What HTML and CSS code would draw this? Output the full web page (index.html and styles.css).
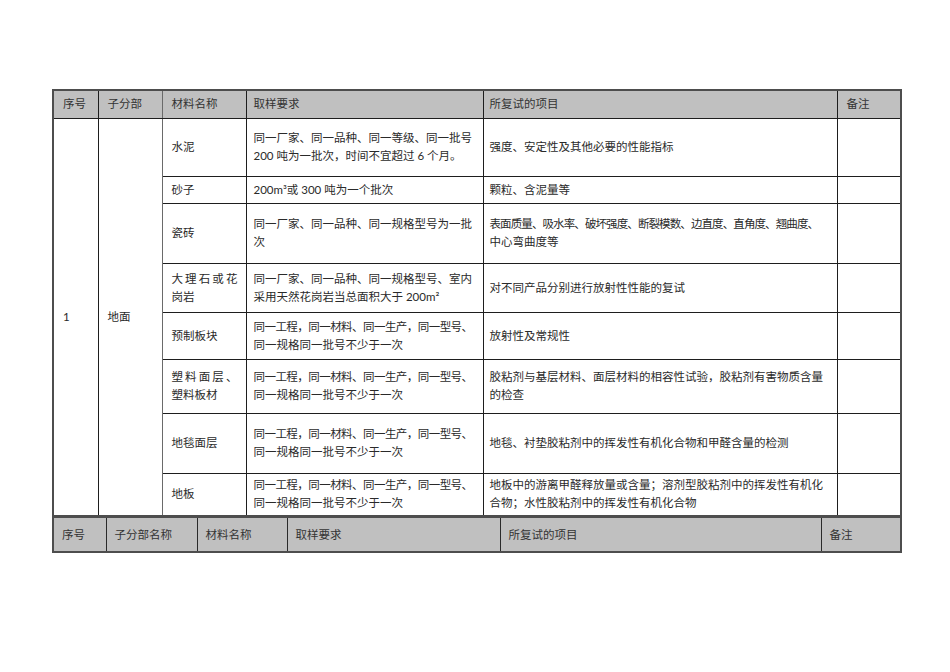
FILE: index.html
```html
<!DOCTYPE html>
<html lang="zh-CN">
<head>
<meta charset="utf-8">
<title>材料复试</title>
<link rel="stylesheet" href="styles.css">
</head>
<body>
<div class="page">
  <table class="grid main">
    <colgroup>
      <col class="c1"><col class="c2"><col class="c3"><col class="c4"><col class="c5"><col class="c6">
    </colgroup>
    <tr class="head">
      <th>序号</th><th class="soft">子分部</th><th>材料名称</th><th>取样要求</th><th>所复试的项目</th><th>备注</th>
    </tr>
    <tr class="r1">
      <td rowspan="8">1</td>
      <td rowspan="8" class="soft">地面</td>
      <td>水泥</td>
      <td class="nw">同一厂家、同一品种、同一等级、同一批号<br>200 吨为一批次，时间不宜超过 6 个月。</td>
      <td class="nw">强度、安定性及其他必要的性能指标</td>
      <td></td>
    </tr>
    <tr class="r2">
      <td>砂子</td>
      <td class="nw">200m³或 300 吨为一个批次</td>
      <td class="nw">颗粒、含泥量等</td>
      <td></td>
    </tr>
    <tr class="r3">
      <td>瓷砖</td>
      <td class="nw">同一厂家、同一品种、同一规格型号为一批<br>次</td>
      <td class="nw"><span class="tight2">表面质量、吸水率、破坏强度、断裂模数、边直度、直角度、翘曲度、</span><br>中心弯曲度等</td>
      <td></td>
    </tr>
    <tr class="r4">
      <td class="just">大理石或花岗岩</td>
      <td class="nw">同一厂家、同一品种、同一规格型号、室内<br>采用天然花岗岩当总面积大于 200m²</td>
      <td class="nw">对不同产品分别进行放射性性能的复试</td>
      <td></td>
    </tr>
    <tr class="r5">
      <td>预制板块</td>
      <td class="nw"><span class="tight">同一工程，同一材料、同一生产，同一型号、</span><br>同一规格同一批号不少于一次</td>
      <td class="nw">放射性及常规性</td>
      <td></td>
    </tr>
    <tr class="r6">
      <td class="just">塑料面层、塑料板材</td>
      <td class="nw"><span class="tight">同一工程，同一材料、同一生产，同一型号、</span><br>同一规格同一批号不少于一次</td>
      <td class="nw">胶粘剂与基层材料、面层材料的相容性试验，胶粘剂有害物质含量<br>的检查</td>
      <td></td>
    </tr>
    <tr class="r7">
      <td>地毯面层</td>
      <td class="nw"><span class="tight">同一工程，同一材料、同一生产，同一型号、</span><br>同一规格同一批号不少于一次</td>
      <td class="nw">地毯、衬垫胶粘剂中的挥发性有机化合物和甲醛含量的检测</td>
      <td></td>
    </tr>
    <tr class="r8">
      <td>地板</td>
      <td class="nw"><span class="tight">同一工程，同一材料、同一生产，同一型号、</span><br>同一规格同一批号不少于一次</td>
      <td class="nw">地板中的游离甲醛释放量或含量；溶剂型胶粘剂中的挥发性有机化<br>合物；水性胶粘剂中的挥发性有机化合物</td>
      <td></td>
    </tr>
  </table>
  <table class="grid foot">
    <colgroup>
      <col class="d1"><col class="d2"><col class="d3"><col class="d4"><col class="d5"><col class="d6">
    </colgroup>
    <tr class="head2">
      <th>序号</th><th>子分部名称</th><th>材料名称</th><th>取样要求</th><th>所复试的项目</th><th>备注</th>
    </tr>
  </table>
</div>
</body>
</html>
```

FILE: styles.css
```css
html, body {
  margin: 0;
  padding: 0;
  background: #ffffff;
}

body {
  font-family: "Lato", "Noto Sans CJK SC", sans-serif;
  font-size: 11.5px;
  color: #2a2a2a;
}

.page {
  padding: 89px 0 0 52px;
}

.grid {
  border-collapse: collapse;
  table-layout: fixed;
  width: 848px;
  border: 2px solid #4d4d4d;
}

.grid th,
.grid td {
  border: 1px solid #1e1e1e;
  padding: 0 8px 0 9px;
  text-align: left;
  vertical-align: middle;
  font-weight: normal;
  line-height: 18px;
  overflow: visible;
}

.grid th {
  background: #c0c0c0;
  color: #333333;
}

.grid .soft {
  border-left-color: #6a6a6a;
  border-right-color: #6a6a6a;
}

.main .c1 { width: 45px; }
.main .c2 { width: 64px; }
.main .c3 { width: 84px; }
.main .c4 { width: 237px; }
.main .c5 { width: 354px; }
.main .c6 { width: 64px; }

.main td:nth-last-child(3),
.main th:nth-child(4) {
  padding-left: 7px;
}

.main th:nth-child(5) {
  padding-left: 6px;
}

.main .nw {
  white-space: nowrap;
}

.main td.nw + td.nw {
  padding-left: 6px;
}

.tight {
  letter-spacing: -0.55px;
}

.tight2 {
  letter-spacing: -0.9px;
}

.just {
  text-align: justify !important;
}

.head { height: 28px; }
.r1 { height: 58px; }
.r2 { height: 27px; }
.r3 { height: 60px; }
.r4 { height: 49px; }
.r5 { height: 47px; }
.r6 { height: 54px; }
.r7 { height: 60px; }
.r8 { height: 43px; }

.foot {
  margin-top: -1px;
}

.foot .d1 { width: 53px; }
.foot .d2 { width: 91px; }
.foot .d3 { width: 90px; }
.foot .d4 { width: 213px; }
.foot .d5 { width: 321px; }
.foot .d6 { width: 80px; }

.head2 { height: 35px; }

.foot th {
  padding-left: 8px;
  border-color: #2a2a2a;
}
```
